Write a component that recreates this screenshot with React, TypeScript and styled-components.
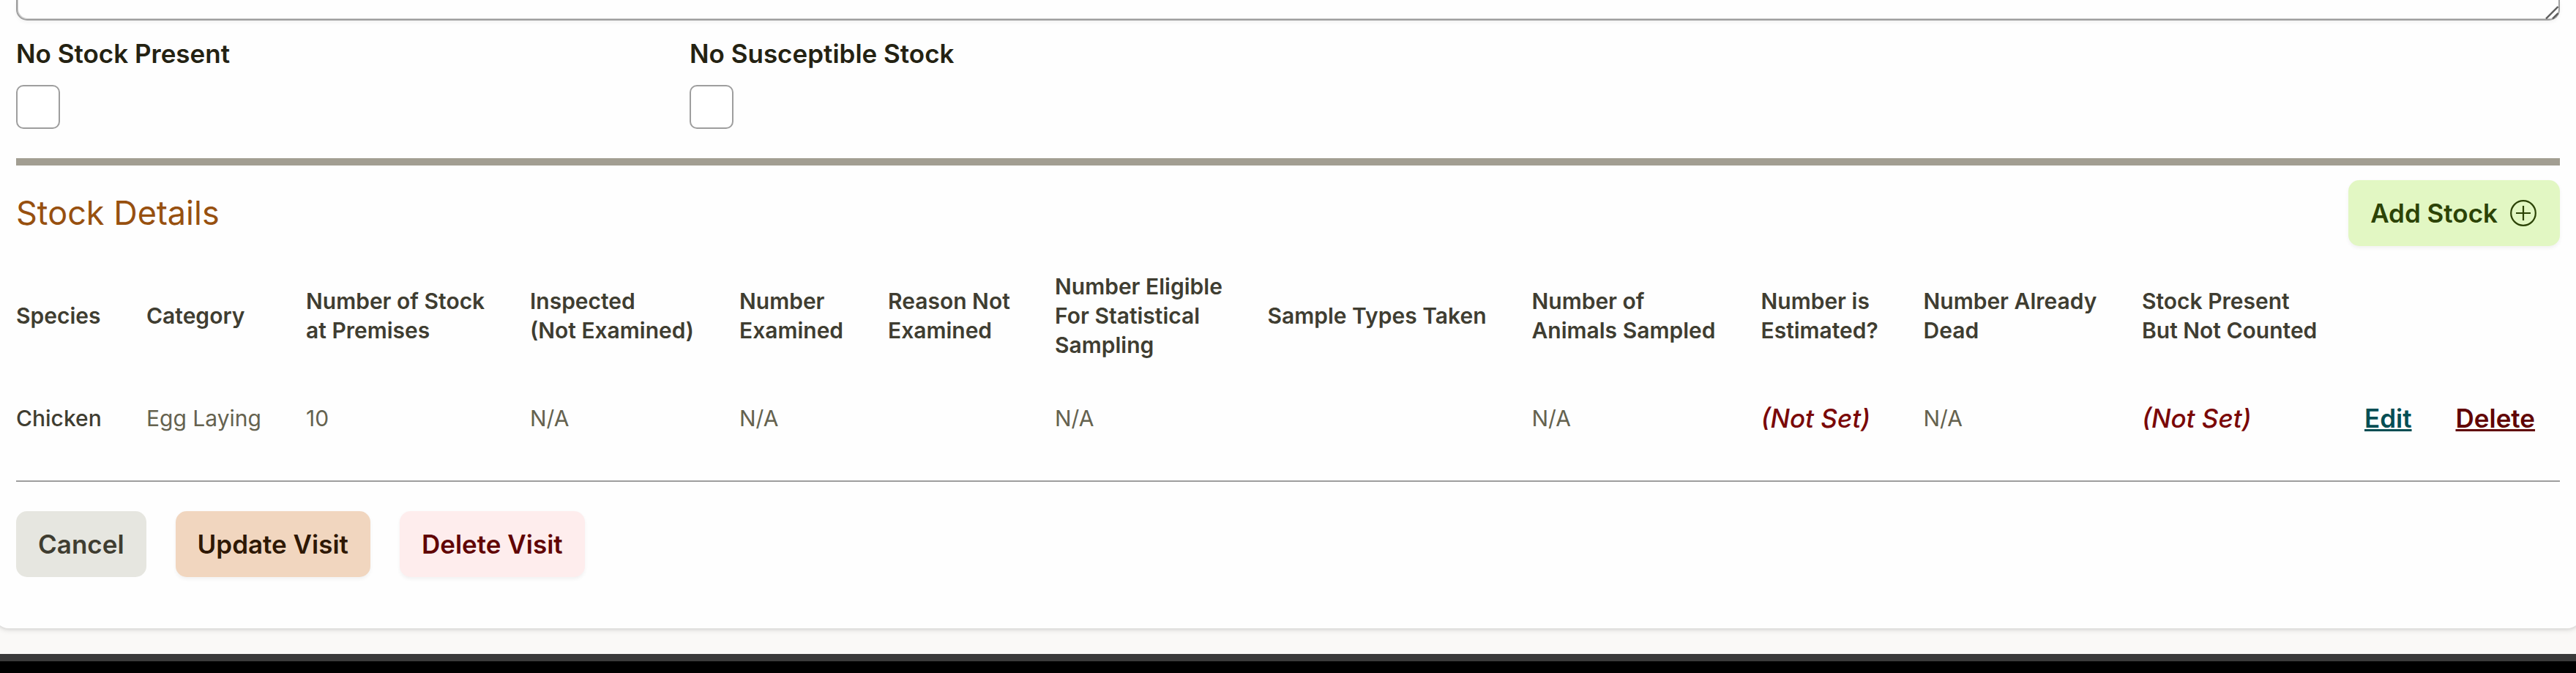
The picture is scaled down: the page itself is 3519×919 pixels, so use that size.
import React from "react";
import styled, { createGlobalStyle, css } from "styled-components";

const GlobalStyle = createGlobalStyle`
  *, *::before, *::after { box-sizing: border-box; }
  body {
    margin: 0;
    background: #faf9f7;
    font-family: Inter, "Liberation Sans", sans-serif;
    font-size: 35px;
    line-height: 50px;
    color: #242212;
    overflow: hidden;
  }
`;

const Page = styled.div`
  height: 919px;
  display: flex;
  flex-direction: column;
  justify-content: space-between;
  overflow: hidden;
`;

const Card = styled.main`
  height: 858px;
  margin: 0 -8px;
  padding: 0 30px 70px;
  background: #fefefe;
  border-radius: 0 0 20px 20px;
  box-shadow: 0 2.5px 7.5px rgba(0, 0, 0, 0.1), 0 2.5px 5px -2.5px rgba(0, 0, 0, 0.1);
`;

const NotesBox = styled.div`
  height: 28px;
  display: flex;
  justify-content: flex-end;
  align-items: flex-end;
  border: 2px solid #9e9e9e;
  border-top: 0;
  border-radius: 0 0 15px 15px;
  box-shadow: inset 1px -1px 0 #cfcfcf, 0 2.5px 5px rgba(0, 0, 0, 0.05);
`;

const Grip = styled.svg`
  display: block;
  width: 20px;
  height: 20px;
`;

const Checks = styled.div`
  display: grid;
  grid-template-columns: 880px 880px;
  column-gap: 40px;
  padding: 20px 0 40px;
`;

const CheckField = styled.label`
  display: flex;
  flex-direction: column;
  gap: 18px;
  font-weight: 600;
`;

const CheckBox = styled.input`
  appearance: none;
  width: 60px;
  height: 60px;
  margin: 0;
  border: 2px solid #9e9e9e;
  border-radius: 10px;
  background: #fff;
`;

const SectionHead = styled.header`
  display: flex;
  justify-content: space-between;
  align-items: center;
  padding-top: 20px;
  border-top: 10px solid #a29e92;
`;

const Title = styled.h2`
  margin: 0;
  font-size: 45px;
  line-height: 70px;
  font-weight: 400;
  color: #97500f;
`;

type Tone = "add" | "neutral" | "primary" | "danger";

const tones: Record<Tone, ReturnType<typeof css>> = {
  add: css`background: #e2f7c3; color: #2c4306;`,
  neutral: css`background: #e6e6e0; color: #3f3d31; box-shadow: none;`,
  primary: css`background: #f1d6bf; color: #2e1804;`,
  danger: css`background: #feeded; color: #610404;`,
};

const Button = styled.button<{ $tone: Tone }>`
  display: flex;
  align-items: center;
  gap: 15px;
  height: 90px;
  padding: 0 30px;
  border: 0;
  border-radius: 15px;
  font: inherit;
  font-weight: 600;
  white-space: nowrap;
  box-shadow: 0 2.5px 5px rgba(0, 0, 0, 0.05);
  ${(p) => tones[p.$tone]}
`;

const PlusIcon = styled.svg`
  display: block;
  width: 40px;
  height: 40px;
`;

const Table = styled.div`
  padding-bottom: 40px;
  border-bottom: 2px solid #9e9e9e;
`;

const Row = styled.div<{ $head?: boolean }>`
  display: grid;
  grid-template-columns: 178px 218px 306px 286px 203px 228px 290.5px 361px 313px 222px 298.5px 304px 124.5px 1fr;
  align-items: center;
  height: ${(p) => (p.$head ? 190 : 90)}px;
`;

const HeadCell = styled.div`
  font-size: 30px;
  line-height: 40px;
  font-weight: 600;
  color: #3f3d31;
  white-space: pre;
`;

const Cell = styled.div<{ $strong?: boolean }>`
  font-size: 30px;
  line-height: 40px;
  font-weight: ${(p) => (p.$strong ? 500 : 400)};
  color: ${(p) => (p.$strong ? "#3f3d31" : "#65624f")};
`;

const NotSet = styled.em`
  font-weight: 500;
  color: #7a0707;
`;

const Action = styled.a<{ $danger?: boolean }>`
  justify-self: start;
  font-weight: 600;
  color: ${(p) => (p.$danger ? "#610404" : "#044e54")};
  text-decoration: underline;
`;

const Footer = styled.footer`
  display: flex;
  gap: 40px;
  padding-top: 40px;
`;

const BottomBar = styled.div`
  height: 26px;
  background: #000;
  border-top: 10px solid #3a3a3a;
`;

const headings = [
  "Species",
  "Category",
  "Number of Stock\nat Premises",
  "Inspected\n(Not Examined)",
  "Number\nExamined",
  "Reason Not\nExamined",
  "Number Eligible\nFor Statistical\nSampling",
  "Sample Types Taken",
  "Number of\nAnimals Sampled",
  "Number is\nEstimated?",
  "Number Already\nDead",
  "Stock Present\nBut Not Counted",
];

const stock = ["Chicken", "Egg Laying", "10", "N/A", "N/A", "", "N/A", "", "N/A", null, "N/A", null];

export default function App() {
  return (
    <>
      <GlobalStyle />
      <Page>
        <Card>
          <NotesBox>
            <Grip viewBox="0 0 20 20" stroke="#5c5c5c" strokeWidth="2.4" fill="none">
              <path d="M3 19.5 19.5 3M12 19.5l7.5-7.5" />
            </Grip>
          </NotesBox>
          <Checks>
            <CheckField>
              No Stock Present
              <CheckBox type="checkbox" />
            </CheckField>
            <CheckField>
              No Susceptible Stock
              <CheckBox type="checkbox" />
            </CheckField>
          </Checks>
          <SectionHead>
            <Title>Stock Details</Title>
            <Button $tone="add">
              Add Stock
              <PlusIcon viewBox="0 0 40 40" fill="none" stroke="currentColor" strokeWidth="2.2">
                <circle cx="20" cy="20" r="16.8" />
                <path d="M20 10v20M10 20h20" />
              </PlusIcon>
            </Button>
          </SectionHead>
          <Table>
            <Row $head>
              {headings.map((h) => (
                <HeadCell key={h}>{h}</HeadCell>
              ))}
            </Row>
            <Row>
              {stock.map((value, i) =>
                value === null ? (
                  <NotSet key={i}>(Not Set)</NotSet>
                ) : (
                  <Cell key={i} $strong={i === 0}>
                    {value}
                  </Cell>
                )
              )}
              <Action>Edit</Action>
              <Action $danger>Delete</Action>
            </Row>
          </Table>
          <Footer>
            <Button $tone="neutral">Cancel</Button>
            <Button $tone="primary">Update Visit</Button>
            <Button $tone="danger">Delete Visit</Button>
          </Footer>
        </Card>
        <BottomBar />
      </Page>
    </>
  );
}
